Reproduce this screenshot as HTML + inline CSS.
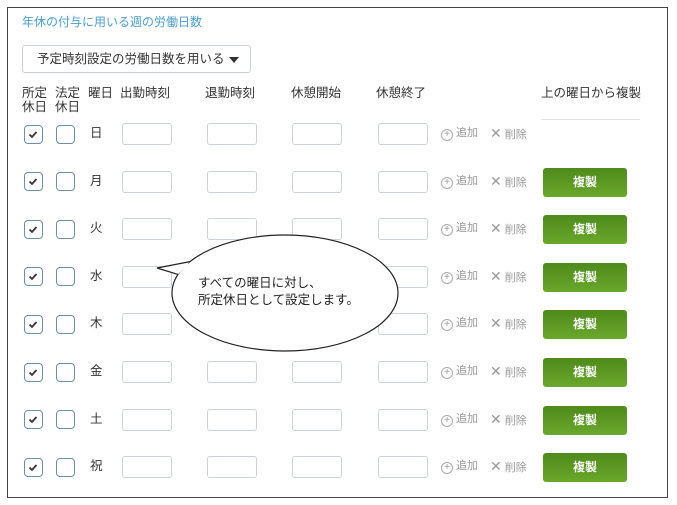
<!DOCTYPE html>
<html><head><meta charset="utf-8"><style>
body{margin:0;width:677px;height:505px;background:#fff;font-family:"Liberation Sans","Noto Sans CJK JP",sans-serif;position:relative;overflow:hidden;color:#333}
.a{position:absolute;white-space:nowrap}
.frame{left:7px;top:7px;width:661px;height:491px;border:1px solid #444;box-sizing:border-box}
.title{left:22px;top:14px;font-size:12px;color:#4a9fd0;line-height:16px}
.dd{left:22px;top:45px;width:229px;height:28px;border:1px solid #c8d0d8;border-radius:3px;box-sizing:border-box;font-size:12.5px;line-height:26px;padding:0 0 0 14px}
.hd{font-size:12.5px;color:#333;line-height:14px}
.cb{width:19px;height:19px;border:1.5px solid #6f8fa6;border-radius:4px;box-sizing:border-box}
.inp{width:50px;height:22px;border:1px solid #ccd2d8;border-radius:3px;box-sizing:border-box}
.sm{font-size:11px;color:#999;line-height:16px}
.btn{width:84px;height:29px;background:linear-gradient(#4f8a1c,#6aa82a);border-radius:3px;color:#fff;font-size:12px;font-weight:bold;text-align:center;line-height:29px}
.day{font-size:12.5px;line-height:16px}
</style></head><body>
<div class="a frame"></div>
<div class="a title">年休の付与に用いる週の労働日数</div>
<div class="a dd">予定時刻設定の労働日数を用いる<span style="position:absolute;left:206px;top:11px;width:0;height:0;border-left:5px solid transparent;border-right:5px solid transparent;border-top:6px solid #333"></span></div>
<div class="a hd" style="left:22px;top:86px">所定<br>休日</div>
<div class="a hd" style="left:55px;top:86px">法定<br>休日</div>
<div class="a hd" style="left:88px;top:86px">曜日</div>
<div class="a hd" style="left:120px;top:86px">出勤時刻</div>
<div class="a hd" style="left:205px;top:86px">退勤時刻</div>
<div class="a hd" style="left:291px;top:86px">休憩開始</div>
<div class="a hd" style="left:376px;top:86px">休憩終了</div>
<div class="a hd" style="left:541px;top:86px">上の曜日から複製</div>
<div class="a" style="left:541px;top:119px;width:99px;height:1px;background:#e0e4e8"></div>
<div id="rows"></div>
<script>
var d=["日","月","火","水","木","金","土","祝"],h="";
for(var i=0;i<8;i++){var c=134+i*47.6,t=c-11;
h+='<div class="a cb" style="left:24px;top:'+(c-9.5)+'px"><svg width="16" height="16" style="position:absolute;left:0;top:0"><path d="M4.5 8.5l2.5 2.5 4.5-5" fill="none" stroke="#333" stroke-width="1.8"/></svg></div>';
h+='<div class="a cb" style="left:56px;top:'+(c-9.5)+'px"></div>';
h+='<div class="a day" style="left:90px;top:'+(c-9)+'px">'+d[i]+'</div>';
[122,207,292,378].forEach(function(x){h+='<div class="a inp" style="left:'+x+'px;top:'+t+'px"></div>'});
h+='<div class="a sm" style="left:441px;top:'+(c-9)+'px"><span style="display:inline-block;width:10px;height:10px;border:1px solid #aaa;border-radius:50%;font-size:10px;line-height:10px;text-align:center;vertical-align:-1px">+</span> 追加</div>';
h+='<div class="a sm" style="left:490px;top:'+(c-9)+'px"><span style="font-size:14px">✕</span> 削除</div>';
if(i>0)h+='<div class="a btn" style="left:543px;top:'+(c-14)+'px">複製</div>';}
document.getElementById('rows').innerHTML=h;
</script>
<svg class="a" style="left:0;top:0" width="677" height="505"><ellipse cx="285" cy="293" rx="113" ry="58" fill="#fff" stroke="#222" stroke-width="1.2"/><path d="M178 274.4 L157 268 L190 261.6" fill="#fff" stroke="#222" stroke-width="1.2"/><path d="M179 272 L165 268.5 L189 264 Z" fill="#fff"/></svg>
<div class="a" style="left:198px;top:275px;font-size:12.5px;line-height:17px;color:#222">すべての曜日に対し、<br>所定休日として設定します。</div>
</body></html>
